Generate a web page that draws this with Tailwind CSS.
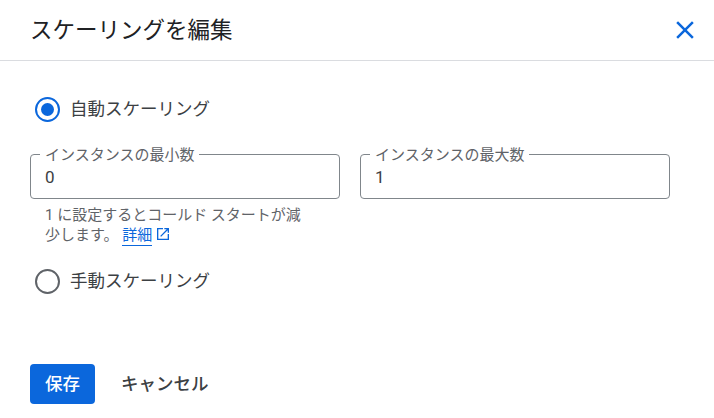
<!DOCTYPE html>
<html lang="ja">
<head>
<meta charset="utf-8">
<script src="https://cdn.jsdelivr.net/npm/@tailwindcss/browser@4"></script>
</head>
<body class="bg-white overflow-hidden font-['Roboto','Noto_Sans_CJK_JP',sans-serif]">
<div class="w-[714px] h-[418px] flex flex-col">
  <header class="h-[61px] shrink-0 border-b border-[#dadce0] flex items-center justify-between pl-[30px] pr-[14px]">
    <h1 class="text-[22.5px] leading-[28px] text-[#202124] font-normal">スケーリングを編集</h1>
    <button class="w-[30px] h-[30px] flex items-center justify-center">
      <svg width="30" height="30" viewBox="0 0 24 24" fill="#0b67dc"><path d="M19 6.41 17.59 5 12 10.59 6.41 5 5 6.41 10.59 12 5 17.59 6.41 19 12 13.41 17.59 19 19 17.59 13.41 12z"/></svg>
    </button>
  </header>
  <main class="flex-1 flex flex-col px-[30px]">
    <label class="flex items-center mt-[36px] h-6 pl-[5px] gap-[10px]">
      <span class="w-[25px] h-[25px] rounded-full border-2 border-[#0b67dc] flex items-center justify-center">
        <span class="w-[13px] h-[13px] rounded-full bg-[#0b67dc]"></span>
      </span>
      <span class="text-[17.5px] leading-6 text-[#3c4043]">自動スケーリング</span>
    </label>
    <div class="flex gap-5 mt-[33px]">
      <div class="w-[310px]">
        <div class="relative h-[45px] border border-[#80868b] rounded-[4px] pl-[14px] pt-[10px] text-[17px] leading-6 text-[#3c4043]">
          0
          <span class="absolute left-[9px] -top-[8px] bg-white px-[5px] text-[15px] leading-4 text-[#5f6368]">インスタンスの最小数</span>
        </div>
        <p class="pl-[15px] pr-[30px] mt-[6px] text-[15px] leading-[20px] text-[#5f6368]">1 に設定するとコールド スタートが減少します。 <a class="text-[#0b67dc] border-b border-[#0b67dc] pb-[1px]">詳細</a><svg class="inline-block ml-[3px] align-[-2px]" width="16" height="16" viewBox="0 0 24 24" fill="#0b67dc"><path d="M19 19H5V5h7V3H3v18h18v-9h-2v7zM14 3v2h3.59l-9.83 9.83 1.41 1.41L19 6.41V10h2V3h-7z"/></svg></p>
      </div>
      <div class="w-[310px]">
        <div class="relative h-[45px] border border-[#80868b] rounded-[4px] pl-[14px] pt-[10px] text-[17px] leading-6 text-[#3c4043]">
          1
          <span class="absolute left-[9px] -top-[8px] bg-white px-[5px] text-[15px] leading-4 text-[#5f6368]">インスタンスの最大数</span>
        </div>
      </div>
    </div>
    <label class="flex items-center mt-[24px] h-6 pl-[5px] gap-[10px]">
      <span class="w-[25px] h-[25px] rounded-full border-2 border-[#5f6368]"></span>
      <span class="text-[17.5px] leading-6 text-[#3c4043]">手動スケーリング</span>
    </label>
    <div class="flex items-center mt-[71px]">
      <button class="w-[65px] h-10 rounded-[4px] bg-[#0b67dc] text-white text-[17.5px] font-medium">保存</button>
      <button class="ml-[26px] text-[17.5px] font-medium text-[#3c4043]">キャンセル</button>
    </div>
  </main>
</div>
</body>
</html>
